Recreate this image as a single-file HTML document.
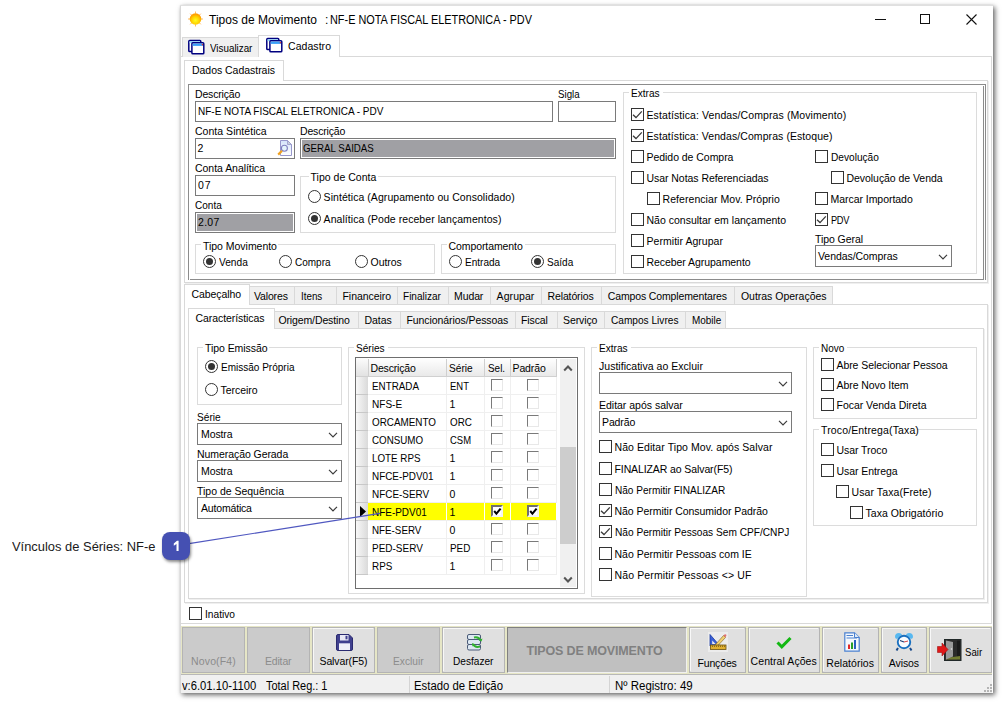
<!DOCTYPE html><html><head><meta charset="utf-8"><style>
*{margin:0;padding:0;box-sizing:content-box}
html,body{width:1002px;height:702px;overflow:hidden;background:#fff;position:relative;font-family:"Liberation Sans",sans-serif}
.t{position:absolute;white-space:nowrap;line-height:20px;font-size:11px}
.b{position:absolute}
svg.b{overflow:visible}
</style></head><body>
<div class="b" style="left:180px;top:5px;width:813px;height:688px;background:#fff;box-shadow:2px 2px 5px 0px rgba(0,0,0,0.6), 0 0 1px rgba(0,0,0,0.1)"></div>
<div class="b" style="left:180px;top:5px;width:1px;height:688px;background:#d8d8d8"></div>
<div class="b" style="left:180px;top:5px;width:813px;height:1px;background:#e0e0e0"></div>
<svg class="b" style="left:187px;top:11px" width="17" height="16" viewBox="0 0 17 16"><g stroke="#ffa020" stroke-width="1" opacity="0.7"><path d="M8.5 0.5V2.5M8.5 13.5V15.5M1 8H3M14 8H16M3.2 2.7L4.6 4.1M12.4 11.9L13.8 13.3M3.2 13.3L4.6 11.9M12.4 4.1L13.8 2.7"/></g><defs><radialGradient id="sg" cx="50%" cy="62%" r="55%"><stop offset="0" stop-color="#ffff20"/><stop offset="0.6" stop-color="#ffd000"/><stop offset="1" stop-color="#ff9a00"/></radialGradient></defs><circle cx="8.5" cy="8" r="5.8" fill="url(#sg)"/></svg>
<div class="t" style="left:209.0px;top:10px;font-size:12px;letter-spacing:0.018px;color:#000;">Tipos de Movimento</div>
<div class="t" style="left:325.0px;top:10px;font-size:12px;letter-spacing:0.000px;color:#000;">:</div>
<div class="t" style="left:330.4px;top:10px;font-size:12px;letter-spacing:0.000px;color:#000;transform:scaleX(0.9067);transform-origin:0 0;">NF-E NOTA FISCAL ELETRONICA - PDV</div>
<div class="b" style="left:875px;top:19px;width:11px;height:1px;background:#111"></div>
<div class="b" style="left:920px;top:14px;width:8px;height:8px;border:1px solid #111"></div>
<svg class="b" style="left:966px;top:14px" width="11" height="11"><path d="M0.5 0.5 L10.5 10.5 M10.5 0.5 L0.5 10.5" stroke="#111" stroke-width="1.1"/></svg>
<div class="b" style="left:180px;top:56px;width:810px;height:566px;border:1px solid #d9d9d9;background:#fff"></div>
<div class="b" style="left:182px;top:37px;width:76px;height:19px;background:#f0f0f0;border:1px solid #d9d9d9;border-bottom:none"></div>
<div class="b" style="left:258px;top:35px;width:80px;height:21px;background:#fff;border:1px solid #d9d9d9;border-bottom:none"></div>
<svg class="b" style="left:187px;top:39px" width="18" height="16" viewBox="0 0 18 16"><rect x="1.8" y="1.6" width="12" height="11" rx="0.9" fill="#fff" stroke="#000080" stroke-width="1.5"/><rect x="2.6" y="2.4" width="10.4" height="1.7" fill="#8fe0ff"/><rect x="4.9" y="3.8" width="11.9" height="11" rx="0.9" fill="#fff" stroke="#000080" stroke-width="1.5"/><rect x="5.7" y="4.6" width="10.3" height="2.3" fill="#3aa0f8"/><rect x="14.8" y="4.9" width="1.2" height="1.4" fill="#e03030"/></svg>
<div class="t" style="left:210.0px;top:38px;font-size:10.5px;letter-spacing:0.000px;color:#000;transform:scaleX(0.9348);transform-origin:0 0;">Visualizar</div>
<svg class="b" style="left:265px;top:37px" width="18" height="16" viewBox="0 0 18 16"><rect x="1.8" y="1.6" width="12" height="11" rx="0.9" fill="#fff" stroke="#000080" stroke-width="1.5"/><rect x="2.6" y="2.4" width="10.4" height="1.7" fill="#8fe0ff"/><rect x="4.9" y="3.8" width="11.9" height="11" rx="0.9" fill="#fff" stroke="#000080" stroke-width="1.5"/><rect x="5.7" y="4.6" width="10.3" height="2.3" fill="#3aa0f8"/><rect x="14.8" y="4.9" width="1.2" height="1.4" fill="#e03030"/></svg>
<div class="t" style="left:288.0px;top:36px;font-size:10.5px;letter-spacing:0.057px;color:#000;">Cadastro</div>
<div class="b" style="left:184px;top:80px;width:802px;height:201px;border:1px solid #d9d9d9;background:#fff;box-shadow:1px 1px 0 #efefef"></div>
<div class="b" style="left:184px;top:60px;width:98px;height:20px;background:#fff;border:1px solid #d9d9d9;border-bottom:none"></div>
<div class="t" style="left:192.0px;top:60px;font-size:10.5px;letter-spacing:-0.033px;color:#000;">Dados Cadastrais</div>
<div class="b" style="left:188px;top:84px;width:796px;height:195px;border-top:1px solid #8c8c8c;border-left:1px solid #8c8c8c;border-right:1px solid #8c8c8c"></div>
<div class="b" style="left:983px;top:86px;width:1px;height:193px;background:#8c8c8c"></div>
<div class="b" style="left:190px;top:279px;width:794px;height:1px;background:#8c8c8c"></div>
<div class="t" style="left:195.0px;top:84px;font-size:10.5px;letter-spacing:-0.171px;color:#000;">Descrição</div>
<div class="b" style="left:195px;top:101px;width:356px;height:19px;border:1px solid #7a7a7a;background:#fff"></div>
<div class="t" style="left:198.0px;top:101px;font-size:10.5px;letter-spacing:0.000px;color:#000;transform:scaleX(0.9515);transform-origin:0 0;">NF-E NOTA FISCAL ELETRONICA - PDV</div>
<div class="t" style="left:558.0px;top:84px;font-size:10.5px;letter-spacing:0.000px;color:#000;transform:scaleX(0.9248);transform-origin:0 0;">Sigla</div>
<div class="b" style="left:558px;top:101px;width:56px;height:19px;border:1px solid #7a7a7a;background:#fff"></div>
<div class="t" style="left:195.0px;top:121px;font-size:10.5px;letter-spacing:0.029px;color:#000;">Conta Sintética</div>
<div class="b" style="left:195px;top:138px;width:98px;height:19px;border:1px solid #7a7a7a;background:#fff"></div>
<div class="t" style="left:197.5px;top:138px;font-size:10.5px;letter-spacing:0.000px;color:#000;">2</div>
<svg class="b" style="left:275px;top:139px" width="18" height="18" viewBox="0 0 18 18"><defs><linearGradient id="pg" x1="0" y1="0" x2="0" y2="1"><stop offset="0" stop-color="#d4e4fa"/><stop offset="1" stop-color="#ffffff"/></linearGradient></defs><path d="M5.5 1.5 H12.5 L16.5 5.5 V16.5 H5.5 Z" fill="url(#pg)" stroke="#9898cc" stroke-width="1"/><path d="M12.5 1.5 V5.5 H16.5 Z" fill="#c8d0d8" stroke="#9898cc" stroke-width="0.8"/><circle cx="9.4" cy="9.3" r="3" fill="#e4f4fc" stroke="#8080c0" stroke-width="1.1"/><path d="M7 11.8 L3.2 15.6" stroke="#f0a020" stroke-width="2.2"/></svg>
<div class="t" style="left:300.0px;top:121px;font-size:10.5px;letter-spacing:-0.171px;color:#000;">Descrição</div>
<div class="b" style="left:300px;top:138px;width:314px;height:19px;border:1px solid #7a7a7a;background:#fff"></div>
<div class="b" style="left:302px;top:140px;width:312px;height:17px;background:#a0a0a4"></div>
<div class="t" style="left:303.2px;top:138px;font-size:10.5px;letter-spacing:0.000px;color:#000;transform:scaleX(0.9234);transform-origin:0 0;">GERAL SAIDAS</div>
<div class="t" style="left:195.0px;top:158px;font-size:10.5px;letter-spacing:-0.038px;color:#000;">Conta Analítica</div>
<div class="b" style="left:195px;top:175px;width:98px;height:19px;border:1px solid #7a7a7a;background:#fff"></div>
<div class="t" style="left:198.0px;top:175px;font-size:10.5px;letter-spacing:0.980px;color:#000;">07</div>
<div class="t" style="left:195.0px;top:195px;font-size:10.5px;letter-spacing:0.000px;color:#000;transform:scaleX(0.9540);transform-origin:0 0;">Conta</div>
<div class="b" style="left:195px;top:212px;width:98px;height:19px;border:1px solid #7a7a7a;background:#fff"></div>
<div class="b" style="left:197px;top:214px;width:96px;height:17px;background:#a0a0a4"></div>
<div class="t" style="left:198.0px;top:212px;font-size:10.5px;letter-spacing:0.300px;color:#000;">2.07</div>
<div class="b" style="left:300px;top:176px;width:314px;height:55px;border:1px solid #dcdcdc"></div>
<div class="b" style="left:308.5px;top:175px;width:69.8px;height:3px;background:#fff"></div>
<div class="t" style="left:310.5px;top:167px;font-size:10.5px;letter-spacing:0.016px;color:#000;">Tipo de Conta</div>
<div class="b" style="left:308px;top:190px;width:11px;height:11px;border:1px solid #333;border-radius:50%;background:#fff"></div>
<div class="t" style="left:323.6px;top:187px;font-size:10.5px;letter-spacing:0.054px;color:#000;">Sintética (Agrupamento ou Consolidado)</div>
<div class="b" style="left:308px;top:212px;width:11px;height:11px;border:1px solid #333;border-radius:50%;background:#fff"></div>
<div class="b" style="left:311px;top:215px;width:7px;height:7px;border-radius:50%;background:#333"></div>
<div class="t" style="left:323.6px;top:209px;font-size:10.5px;letter-spacing:0.061px;color:#000;">Analítica (Pode receber lançamentos)</div>
<div class="b" style="left:195px;top:244px;width:238px;height:28px;border:1px solid #dcdcdc"></div>
<div class="b" style="left:201px;top:243px;width:77.32px;height:3px;background:#fff"></div>
<div class="t" style="left:203.0px;top:236px;font-size:10.5px;letter-spacing:-0.027px;color:#000;">Tipo Movimento</div>
<div class="b" style="left:203px;top:255px;width:11px;height:11px;border:1px solid #333;border-radius:50%;background:#fff"></div>
<div class="b" style="left:206px;top:258px;width:7px;height:7px;border-radius:50%;background:#333"></div>
<div class="t" style="left:218.6px;top:252px;font-size:10.5px;letter-spacing:0.000px;color:#000;transform:scaleX(0.9679);transform-origin:0 0;">Venda</div>
<div class="b" style="left:279px;top:255px;width:11px;height:11px;border:1px solid #333;border-radius:50%;background:#fff"></div>
<div class="t" style="left:294.6px;top:252px;font-size:10.5px;letter-spacing:0.000px;color:#000;transform:scaleX(0.9512);transform-origin:0 0;">Compra</div>
<div class="b" style="left:355px;top:255px;width:11px;height:11px;border:1px solid #333;border-radius:50%;background:#fff"></div>
<div class="t" style="left:370.6px;top:252px;font-size:10.5px;letter-spacing:-0.082px;color:#000;">Outros</div>
<div class="b" style="left:441px;top:244px;width:173px;height:28px;border:1px solid #dcdcdc"></div>
<div class="b" style="left:446.5px;top:243px;width:78.25999999999999px;height:3px;background:#fff"></div>
<div class="t" style="left:448.5px;top:236px;font-size:10.5px;letter-spacing:-0.085px;color:#000;">Comportamento</div>
<div class="b" style="left:449px;top:255px;width:11px;height:11px;border:1px solid #333;border-radius:50%;background:#fff"></div>
<div class="t" style="left:464.6px;top:252px;font-size:10.5px;letter-spacing:0.000px;color:#000;transform:scaleX(0.9566);transform-origin:0 0;">Entrada</div>
<div class="b" style="left:531px;top:255px;width:11px;height:11px;border:1px solid #333;border-radius:50%;background:#fff"></div>
<div class="b" style="left:534px;top:258px;width:7px;height:7px;border-radius:50%;background:#333"></div>
<div class="t" style="left:546.6px;top:252px;font-size:10.5px;letter-spacing:0.000px;color:#000;transform:scaleX(0.9570);transform-origin:0 0;">Saída</div>
<div class="b" style="left:623px;top:92px;width:352px;height:180px;border:1px solid #dcdcdc"></div>
<div class="b" style="left:629px;top:91px;width:34.08px;height:3px;background:#fff"></div>
<div class="t" style="left:631.0px;top:83px;font-size:10.5px;letter-spacing:0.000px;color:#000;transform:scaleX(0.9615);transform-origin:0 0;">Extras</div>
<div class="b" style="left:631px;top:108px;width:11px;height:11px;border:1px solid #333;background:#fff"></div>
<svg class="b" style="left:631px;top:108px" width="13" height="13"><path d="M2 6.8 L5 9.6 L10.8 3.4" stroke="#3a3a3a" stroke-width="1.3" fill="none"/></svg>
<div class="t" style="left:646.5px;top:105px;font-size:10.5px;letter-spacing:0.095px;color:#000;">Estatística: Vendas/Compras (Movimento)</div>
<div class="b" style="left:631px;top:129px;width:11px;height:11px;border:1px solid #333;background:#fff"></div>
<svg class="b" style="left:631px;top:129px" width="13" height="13"><path d="M2 6.8 L5 9.6 L10.8 3.4" stroke="#3a3a3a" stroke-width="1.3" fill="none"/></svg>
<div class="t" style="left:646.5px;top:126px;font-size:10.5px;letter-spacing:0.077px;color:#000;">Estatística: Vendas/Compras (Estoque)</div>
<div class="b" style="left:631px;top:150px;width:11px;height:11px;border:1px solid #333;background:#fff"></div>
<div class="t" style="left:646.5px;top:147px;font-size:10.5px;letter-spacing:-0.042px;color:#000;">Pedido de Compra</div>
<div class="b" style="left:631px;top:171px;width:11px;height:11px;border:1px solid #333;background:#fff"></div>
<div class="t" style="left:646.5px;top:168px;font-size:10.5px;letter-spacing:-0.049px;color:#000;">Usar Notas Referenciadas</div>
<div class="b" style="left:647px;top:192px;width:11px;height:11px;border:1px solid #333;background:#fff"></div>
<div class="t" style="left:662.5px;top:189px;font-size:10.5px;letter-spacing:0.062px;color:#000;">Referenciar Mov. Próprio</div>
<div class="b" style="left:631px;top:213px;width:11px;height:11px;border:1px solid #333;background:#fff"></div>
<div class="t" style="left:646.5px;top:210px;font-size:10.5px;letter-spacing:0.005px;color:#000;">Não consultar em lançamento</div>
<div class="b" style="left:631px;top:234px;width:11px;height:11px;border:1px solid #333;background:#fff"></div>
<div class="t" style="left:646.5px;top:231px;font-size:10.5px;letter-spacing:0.043px;color:#000;">Permitir Agrupar</div>
<div class="b" style="left:631px;top:255px;width:11px;height:11px;border:1px solid #333;background:#fff"></div>
<div class="t" style="left:646.5px;top:252px;font-size:10.5px;letter-spacing:-0.054px;color:#000;">Receber Agrupamento</div>
<div class="b" style="left:815px;top:150px;width:11px;height:11px;border:1px solid #333;background:#fff"></div>
<div class="t" style="left:830.5px;top:147px;font-size:10.5px;letter-spacing:0.000px;color:#000;transform:scaleX(0.9647);transform-origin:0 0;">Devolução</div>
<div class="b" style="left:831px;top:171px;width:11px;height:11px;border:1px solid #333;background:#fff"></div>
<div class="t" style="left:846.5px;top:168px;font-size:10.5px;letter-spacing:-0.051px;color:#000;">Devolução de Venda</div>
<div class="b" style="left:815px;top:192px;width:11px;height:11px;border:1px solid #333;background:#fff"></div>
<div class="t" style="left:830.5px;top:189px;font-size:10.5px;letter-spacing:-0.042px;color:#000;">Marcar Importado</div>
<div class="b" style="left:815px;top:213px;width:11px;height:11px;border:1px solid #333;background:#fff"></div>
<svg class="b" style="left:815px;top:213px" width="13" height="13"><path d="M2 6.8 L5 9.6 L10.8 3.4" stroke="#3a3a3a" stroke-width="1.3" fill="none"/></svg>
<div class="t" style="left:830.5px;top:210px;font-size:10.5px;letter-spacing:-0.343px;color:#000;transform:scaleX(0.8800);transform-origin:0 0;">PDV</div>
<div class="t" style="left:815.0px;top:229px;font-size:10.5px;letter-spacing:-0.068px;color:#000;">Tipo Geral</div>
<div class="b" style="left:815px;top:245px;width:135px;height:20px;border:1px solid #7a7a7a;background:#fff"></div>
<svg class="b" style="left:938px;top:254px" width="10" height="6"><path d="M1 0.8 L5 4.8 L9 0.8" stroke="#3c3c3c" stroke-width="1.2" fill="none"/></svg>
<div class="t" style="left:818.0px;top:246px;font-size:10.5px;letter-spacing:-0.058px;color:#000;">Vendas/Compras</div>
<div class="b" style="left:184px;top:304px;width:802px;height:297px;border:1px solid #d9d9d9;background:#fff;box-shadow:1px 1px 0 #efefef"></div>
<div class="b" style="left:184px;top:284px;width:64px;height:20px;background:#fff;border:1px solid #d9d9d9;border-bottom:none"></div>
<div class="t" style="left:191.6px;top:284px;font-size:10.5px;letter-spacing:-0.100px;color:#000;">Cabeçalho</div>
<div class="b" style="left:249px;top:286px;width:44px;height:17px;background:#f0f0f0;border:1px solid #d9d9d9;border-bottom:none"></div>
<div class="t" style="left:253.9px;top:286px;font-size:10.5px;letter-spacing:-0.132px;color:#000;">Valores</div>
<div class="b" style="left:294px;top:286px;width:41px;height:17px;background:#f0f0f0;border:1px solid #d9d9d9;border-bottom:none"></div>
<div class="t" style="left:300.8px;top:286px;font-size:10.5px;letter-spacing:0.000px;color:#000;transform:scaleX(0.9346);transform-origin:0 0;">Itens</div>
<div class="b" style="left:336px;top:286px;width:60px;height:17px;background:#f0f0f0;border:1px solid #d9d9d9;border-bottom:none"></div>
<div class="t" style="left:342.5px;top:286px;font-size:10.5px;letter-spacing:-0.056px;color:#000;">Financeiro</div>
<div class="b" style="left:397px;top:286px;width:50px;height:17px;background:#f0f0f0;border:1px solid #d9d9d9;border-bottom:none"></div>
<div class="t" style="left:403.4px;top:286px;font-size:10.5px;letter-spacing:0.000px;color:#000;transform:scaleX(0.9550);transform-origin:0 0;">Finalizar</div>
<div class="b" style="left:448px;top:286px;width:41px;height:17px;background:#f0f0f0;border:1px solid #d9d9d9;border-bottom:none"></div>
<div class="t" style="left:454.0px;top:286px;font-size:10.5px;letter-spacing:-0.100px;color:#000;">Mudar</div>
<div class="b" style="left:490px;top:286px;width:50px;height:17px;background:#f0f0f0;border:1px solid #d9d9d9;border-bottom:none"></div>
<div class="t" style="left:496.6px;top:286px;font-size:10.5px;letter-spacing:0.067px;color:#000;">Agrupar</div>
<div class="b" style="left:541px;top:286px;width:59px;height:17px;background:#f0f0f0;border:1px solid #d9d9d9;border-bottom:none"></div>
<div class="t" style="left:547.5px;top:286px;font-size:10.5px;letter-spacing:-0.123px;color:#000;">Relatórios</div>
<div class="b" style="left:601px;top:286px;width:132px;height:17px;background:#f0f0f0;border:1px solid #d9d9d9;border-bottom:none"></div>
<div class="t" style="left:607.8px;top:286px;font-size:10.5px;letter-spacing:-0.140px;color:#000;">Campos Complementares</div>
<div class="b" style="left:734px;top:286px;width:97px;height:17px;background:#f0f0f0;border:1px solid #d9d9d9;border-bottom:none"></div>
<div class="t" style="left:740.9px;top:286px;font-size:10.5px;letter-spacing:-0.007px;color:#000;">Outras Operações</div>
<div class="b" style="left:188px;top:328px;width:794px;height:269px;border:1px solid #d9d9d9;background:#fff;box-shadow:1px 1px 0 #efefef"></div>
<div class="b" style="left:188px;top:308px;width:85px;height:20px;background:#fff;border:1px solid #d9d9d9;border-bottom:none"></div>
<div class="t" style="left:195.6px;top:308px;font-size:10.5px;letter-spacing:-0.084px;color:#000;">Características</div>
<div class="b" style="left:274px;top:311px;width:83px;height:16px;background:#f0f0f0;border:1px solid #d9d9d9;border-bottom:none"></div>
<div class="t" style="left:278.4px;top:310px;font-size:10.5px;letter-spacing:-0.115px;color:#000;">Origem/Destino</div>
<div class="b" style="left:358px;top:311px;width:41px;height:16px;background:#f0f0f0;border:1px solid #d9d9d9;border-bottom:none"></div>
<div class="t" style="left:364.5px;top:310px;font-size:10.5px;letter-spacing:-0.050px;color:#000;">Datas</div>
<div class="b" style="left:400px;top:311px;width:114px;height:16px;background:#f0f0f0;border:1px solid #d9d9d9;border-bottom:none"></div>
<div class="t" style="left:406.5px;top:310px;font-size:10.5px;letter-spacing:-0.079px;color:#000;">Funcionários/Pessoas</div>
<div class="b" style="left:515px;top:311px;width:41px;height:16px;background:#f0f0f0;border:1px solid #d9d9d9;border-bottom:none"></div>
<div class="t" style="left:521.0px;top:310px;font-size:10.5px;letter-spacing:-0.120px;color:#000;">Fiscal</div>
<div class="b" style="left:557px;top:311px;width:46px;height:16px;background:#f0f0f0;border:1px solid #d9d9d9;border-bottom:none"></div>
<div class="t" style="left:563.0px;top:310px;font-size:10.5px;letter-spacing:-0.094px;color:#000;">Serviço</div>
<div class="b" style="left:604px;top:311px;width:80px;height:16px;background:#f0f0f0;border:1px solid #d9d9d9;border-bottom:none"></div>
<div class="t" style="left:610.6px;top:310px;font-size:10.5px;letter-spacing:0.000px;color:#000;transform:scaleX(0.9634);transform-origin:0 0;">Campos Livres</div>
<div class="b" style="left:685px;top:311px;width:39px;height:16px;background:#f0f0f0;border:1px solid #d9d9d9;border-bottom:none"></div>
<div class="t" style="left:691.6px;top:310px;font-size:10.5px;letter-spacing:0.000px;color:#000;transform:scaleX(0.9484);transform-origin:0 0;">Mobile</div>
<div class="b" style="left:197px;top:347px;width:143px;height:56px;border:1px solid #dcdcdc"></div>
<div class="b" style="left:203px;top:346px;width:66.03999999999999px;height:3px;background:#fff"></div>
<div class="t" style="left:205.0px;top:338px;font-size:10.5px;letter-spacing:-0.059px;color:#000;">Tipo Emissão</div>
<div class="b" style="left:205px;top:360px;width:11px;height:11px;border:1px solid #333;border-radius:50%;background:#fff"></div>
<div class="b" style="left:208px;top:363px;width:7px;height:7px;border-radius:50%;background:#333"></div>
<div class="t" style="left:220.6px;top:357px;font-size:10.5px;letter-spacing:0.000px;color:#000;transform:scaleX(0.9538);transform-origin:0 0;">Emissão Própria</div>
<div class="b" style="left:205px;top:383px;width:11px;height:11px;border:1px solid #333;border-radius:50%;background:#fff"></div>
<div class="t" style="left:220.6px;top:380px;font-size:10.5px;letter-spacing:-0.045px;color:#000;">Terceiro</div>
<div class="t" style="left:196.5px;top:407px;font-size:10.5px;letter-spacing:0.000px;color:#000;transform:scaleX(0.9645);transform-origin:0 0;">Série</div>
<div class="b" style="left:197px;top:423px;width:143px;height:20px;border:1px solid #7a7a7a;background:#fff"></div>
<svg class="b" style="left:328px;top:432px" width="10" height="6"><path d="M1 0.8 L5 4.8 L9 0.8" stroke="#3c3c3c" stroke-width="1.2" fill="none"/></svg>
<div class="t" style="left:201.0px;top:424px;font-size:10.5px;letter-spacing:-0.100px;color:#000;">Mostra</div>
<div class="t" style="left:197.0px;top:444px;font-size:10.5px;letter-spacing:-0.065px;color:#000;">Numeração Gerada</div>
<div class="b" style="left:197px;top:460px;width:143px;height:20px;border:1px solid #7a7a7a;background:#fff"></div>
<svg class="b" style="left:328px;top:469px" width="10" height="6"><path d="M1 0.8 L5 4.8 L9 0.8" stroke="#3c3c3c" stroke-width="1.2" fill="none"/></svg>
<div class="t" style="left:201.0px;top:461px;font-size:10.5px;letter-spacing:-0.100px;color:#000;">Mostra</div>
<div class="t" style="left:197.0px;top:481px;font-size:10.5px;letter-spacing:-0.012px;color:#000;">Tipo de Sequência</div>
<div class="b" style="left:197px;top:497px;width:143px;height:20px;border:1px solid #7a7a7a;background:#fff"></div>
<svg class="b" style="left:328px;top:506px" width="10" height="6"><path d="M1 0.8 L5 4.8 L9 0.8" stroke="#3c3c3c" stroke-width="1.2" fill="none"/></svg>
<div class="t" style="left:201.0px;top:498px;font-size:10.5px;letter-spacing:-0.174px;color:#000;">Automática</div>
<div class="b" style="left:348px;top:347px;width:235px;height:245px;border:1px solid #dcdcdc"></div>
<div class="b" style="left:354px;top:346px;width:34.08px;height:3px;background:#fff"></div>
<div class="t" style="left:356.0px;top:338px;font-size:10.5px;letter-spacing:0.000px;color:#000;transform:scaleX(0.9604);transform-origin:0 0;">Séries</div>
<div class="b" style="left:355px;top:357px;width:221px;height:230px;border:1px solid #6e6e6e;background:#fff"></div>
<div class="b" style="left:356px;top:358px;width:201px;height:18px;background:linear-gradient(#ffffff,#e9e9e9)"></div>
<div class="b" style="left:356px;top:376px;width:201px;height:1px;background:#d0d0d0"></div>
<div class="b" style="left:356px;top:358px;width:12px;height:18px;background:linear-gradient(#fcfcfc,#e2e2e2)"></div>
<div class="b" style="left:368px;top:359px;width:1px;height:17px;background:#cfcfcf"></div>
<div class="b" style="left:446px;top:359px;width:1px;height:17px;background:#cfcfcf"></div>
<div class="b" style="left:484px;top:359px;width:1px;height:17px;background:#cfcfcf"></div>
<div class="b" style="left:510px;top:359px;width:1px;height:17px;background:#cfcfcf"></div>
<div class="b" style="left:556px;top:359px;width:1px;height:17px;background:#cfcfcf"></div>
<div class="t" style="left:370.5px;top:358px;font-size:10.5px;letter-spacing:-0.171px;color:#000;">Descrição</div>
<div class="t" style="left:449.0px;top:358px;font-size:10.5px;letter-spacing:0.000px;color:#000;transform:scaleX(0.9645);transform-origin:0 0;">Série</div>
<div class="t" style="left:487.5px;top:358px;font-size:10.5px;letter-spacing:0.000px;color:#000;transform:scaleX(0.9444);transform-origin:0 0;">Sel.</div>
<div class="t" style="left:512.5px;top:358px;font-size:10.5px;letter-spacing:-0.125px;color:#000;">Padrão</div>
<div class="b" style="left:356px;top:377px;width:12px;height:17px;background:linear-gradient(90deg,#f8f8f8,#dadada)"></div>
<div class="b" style="left:356px;top:394px;width:12px;height:1px;background:#c8c8c8"></div>
<div class="b" style="left:368px;top:394px;width:189px;height:1px;background:#efefef"></div>
<div class="b" style="left:446px;top:377px;width:1px;height:17px;background:#efefef"></div>
<div class="b" style="left:484px;top:377px;width:1px;height:17px;background:#efefef"></div>
<div class="b" style="left:510px;top:377px;width:1px;height:17px;background:#efefef"></div>
<div class="b" style="left:556px;top:377px;width:1px;height:17px;background:#efefef"></div>
<div class="t" style="left:371.5px;top:376px;font-size:10.5px;letter-spacing:0.000px;color:#000;transform:scaleX(0.9353);transform-origin:0 0;">ENTRADA</div>
<div class="t" style="left:449.6px;top:376px;font-size:10.5px;letter-spacing:0.000px;color:#000;transform:scaleX(0.9000);transform-origin:0 0;">ENT</div>
<div class="b" style="left:491px;top:379px;width:10px;height:10px;border-top:1px solid #7a7a7a;border-left:1px solid #7a7a7a;border-right:1px solid #e8e8e8;border-bottom:1px solid #e8e8e8"></div>
<div class="b" style="left:527px;top:379px;width:10px;height:10px;border-top:1px solid #7a7a7a;border-left:1px solid #7a7a7a;border-right:1px solid #e8e8e8;border-bottom:1px solid #e8e8e8"></div>
<div class="b" style="left:356px;top:395px;width:12px;height:17px;background:linear-gradient(90deg,#f8f8f8,#dadada)"></div>
<div class="b" style="left:356px;top:412px;width:12px;height:1px;background:#c8c8c8"></div>
<div class="b" style="left:368px;top:412px;width:189px;height:1px;background:#efefef"></div>
<div class="b" style="left:446px;top:395px;width:1px;height:17px;background:#efefef"></div>
<div class="b" style="left:484px;top:395px;width:1px;height:17px;background:#efefef"></div>
<div class="b" style="left:510px;top:395px;width:1px;height:17px;background:#efefef"></div>
<div class="b" style="left:556px;top:395px;width:1px;height:17px;background:#efefef"></div>
<div class="t" style="left:371.5px;top:394px;font-size:10.5px;letter-spacing:0.000px;color:#000;transform:scaleX(0.9581);transform-origin:0 0;">NFS-E</div>
<div class="t" style="left:449.6px;top:394px;font-size:10.5px;letter-spacing:0.000px;color:#000;">1</div>
<div class="b" style="left:491px;top:397px;width:10px;height:10px;border-top:1px solid #7a7a7a;border-left:1px solid #7a7a7a;border-right:1px solid #e8e8e8;border-bottom:1px solid #e8e8e8"></div>
<div class="b" style="left:527px;top:397px;width:10px;height:10px;border-top:1px solid #7a7a7a;border-left:1px solid #7a7a7a;border-right:1px solid #e8e8e8;border-bottom:1px solid #e8e8e8"></div>
<div class="b" style="left:356px;top:413px;width:12px;height:17px;background:linear-gradient(90deg,#f8f8f8,#dadada)"></div>
<div class="b" style="left:356px;top:430px;width:12px;height:1px;background:#c8c8c8"></div>
<div class="b" style="left:368px;top:430px;width:189px;height:1px;background:#efefef"></div>
<div class="b" style="left:446px;top:413px;width:1px;height:17px;background:#efefef"></div>
<div class="b" style="left:484px;top:413px;width:1px;height:17px;background:#efefef"></div>
<div class="b" style="left:510px;top:413px;width:1px;height:17px;background:#efefef"></div>
<div class="b" style="left:556px;top:413px;width:1px;height:17px;background:#efefef"></div>
<div class="t" style="left:371.5px;top:412px;font-size:10.5px;letter-spacing:0.000px;color:#000;transform:scaleX(0.9391);transform-origin:0 0;">ORCAMENTO</div>
<div class="t" style="left:449.6px;top:412px;font-size:10.5px;letter-spacing:0.000px;color:#000;transform:scaleX(0.9375);transform-origin:0 0;">ORC</div>
<div class="b" style="left:491px;top:415px;width:10px;height:10px;border-top:1px solid #7a7a7a;border-left:1px solid #7a7a7a;border-right:1px solid #e8e8e8;border-bottom:1px solid #e8e8e8"></div>
<div class="b" style="left:527px;top:415px;width:10px;height:10px;border-top:1px solid #7a7a7a;border-left:1px solid #7a7a7a;border-right:1px solid #e8e8e8;border-bottom:1px solid #e8e8e8"></div>
<div class="b" style="left:356px;top:431px;width:12px;height:17px;background:linear-gradient(90deg,#f8f8f8,#dadada)"></div>
<div class="b" style="left:356px;top:448px;width:12px;height:1px;background:#c8c8c8"></div>
<div class="b" style="left:368px;top:448px;width:189px;height:1px;background:#efefef"></div>
<div class="b" style="left:446px;top:431px;width:1px;height:17px;background:#efefef"></div>
<div class="b" style="left:484px;top:431px;width:1px;height:17px;background:#efefef"></div>
<div class="b" style="left:510px;top:431px;width:1px;height:17px;background:#efefef"></div>
<div class="b" style="left:556px;top:431px;width:1px;height:17px;background:#efefef"></div>
<div class="t" style="left:371.5px;top:430px;font-size:10.5px;letter-spacing:0.000px;color:#000;transform:scaleX(0.9321);transform-origin:0 0;">CONSUMO</div>
<div class="t" style="left:449.6px;top:430px;font-size:10.5px;letter-spacing:0.000px;color:#000;transform:scaleX(0.9000);transform-origin:0 0;">CSM</div>
<div class="b" style="left:491px;top:433px;width:10px;height:10px;border-top:1px solid #7a7a7a;border-left:1px solid #7a7a7a;border-right:1px solid #e8e8e8;border-bottom:1px solid #e8e8e8"></div>
<div class="b" style="left:527px;top:433px;width:10px;height:10px;border-top:1px solid #7a7a7a;border-left:1px solid #7a7a7a;border-right:1px solid #e8e8e8;border-bottom:1px solid #e8e8e8"></div>
<div class="b" style="left:356px;top:449px;width:12px;height:17px;background:linear-gradient(90deg,#f8f8f8,#dadada)"></div>
<div class="b" style="left:356px;top:466px;width:12px;height:1px;background:#c8c8c8"></div>
<div class="b" style="left:368px;top:466px;width:189px;height:1px;background:#efefef"></div>
<div class="b" style="left:446px;top:449px;width:1px;height:17px;background:#efefef"></div>
<div class="b" style="left:484px;top:449px;width:1px;height:17px;background:#efefef"></div>
<div class="b" style="left:510px;top:449px;width:1px;height:17px;background:#efefef"></div>
<div class="b" style="left:556px;top:449px;width:1px;height:17px;background:#efefef"></div>
<div class="t" style="left:371.5px;top:448px;font-size:10.5px;letter-spacing:0.000px;color:#000;transform:scaleX(0.9346);transform-origin:0 0;">LOTE RPS</div>
<div class="t" style="left:449.6px;top:448px;font-size:10.5px;letter-spacing:0.000px;color:#000;">1</div>
<div class="b" style="left:491px;top:451px;width:10px;height:10px;border-top:1px solid #7a7a7a;border-left:1px solid #7a7a7a;border-right:1px solid #e8e8e8;border-bottom:1px solid #e8e8e8"></div>
<div class="b" style="left:527px;top:451px;width:10px;height:10px;border-top:1px solid #7a7a7a;border-left:1px solid #7a7a7a;border-right:1px solid #e8e8e8;border-bottom:1px solid #e8e8e8"></div>
<div class="b" style="left:356px;top:467px;width:12px;height:17px;background:linear-gradient(90deg,#f8f8f8,#dadada)"></div>
<div class="b" style="left:356px;top:484px;width:12px;height:1px;background:#c8c8c8"></div>
<div class="b" style="left:368px;top:484px;width:189px;height:1px;background:#efefef"></div>
<div class="b" style="left:446px;top:467px;width:1px;height:17px;background:#efefef"></div>
<div class="b" style="left:484px;top:467px;width:1px;height:17px;background:#efefef"></div>
<div class="b" style="left:510px;top:467px;width:1px;height:17px;background:#efefef"></div>
<div class="b" style="left:556px;top:467px;width:1px;height:17px;background:#efefef"></div>
<div class="t" style="left:371.5px;top:466px;font-size:10.5px;letter-spacing:0.000px;color:#000;transform:scaleX(0.9415);transform-origin:0 0;">NFCE-PDV01</div>
<div class="t" style="left:449.6px;top:466px;font-size:10.5px;letter-spacing:0.000px;color:#000;">1</div>
<div class="b" style="left:491px;top:469px;width:10px;height:10px;border-top:1px solid #7a7a7a;border-left:1px solid #7a7a7a;border-right:1px solid #e8e8e8;border-bottom:1px solid #e8e8e8"></div>
<div class="b" style="left:527px;top:469px;width:10px;height:10px;border-top:1px solid #7a7a7a;border-left:1px solid #7a7a7a;border-right:1px solid #e8e8e8;border-bottom:1px solid #e8e8e8"></div>
<div class="b" style="left:356px;top:485px;width:12px;height:17px;background:linear-gradient(90deg,#f8f8f8,#dadada)"></div>
<div class="b" style="left:356px;top:502px;width:12px;height:1px;background:#c8c8c8"></div>
<div class="b" style="left:368px;top:502px;width:189px;height:1px;background:#efefef"></div>
<div class="b" style="left:446px;top:485px;width:1px;height:17px;background:#efefef"></div>
<div class="b" style="left:484px;top:485px;width:1px;height:17px;background:#efefef"></div>
<div class="b" style="left:510px;top:485px;width:1px;height:17px;background:#efefef"></div>
<div class="b" style="left:556px;top:485px;width:1px;height:17px;background:#efefef"></div>
<div class="t" style="left:371.5px;top:484px;font-size:10.5px;letter-spacing:0.000px;color:#000;transform:scaleX(0.9443);transform-origin:0 0;">NFCE-SERV</div>
<div class="t" style="left:449.6px;top:484px;font-size:10.5px;letter-spacing:0.000px;color:#000;">0</div>
<div class="b" style="left:491px;top:487px;width:10px;height:10px;border-top:1px solid #7a7a7a;border-left:1px solid #7a7a7a;border-right:1px solid #e8e8e8;border-bottom:1px solid #e8e8e8"></div>
<div class="b" style="left:527px;top:487px;width:10px;height:10px;border-top:1px solid #7a7a7a;border-left:1px solid #7a7a7a;border-right:1px solid #e8e8e8;border-bottom:1px solid #e8e8e8"></div>
<div class="b" style="left:356px;top:503px;width:12px;height:17px;background:linear-gradient(90deg,#f8f8f8,#dadada)"></div>
<div class="b" style="left:356px;top:520px;width:12px;height:1px;background:#c8c8c8"></div>
<div class="b" style="left:368px;top:503px;width:188px;height:17px;background:#ffff00"></div>
<svg class="b" style="left:360px;top:506px" width="7" height="11"><path d="M0 0 L6 5.5 L0 11 Z" fill="#000"/></svg>
<div class="b" style="left:446px;top:503px;width:1px;height:17px;background:#fff"></div>
<div class="b" style="left:484px;top:503px;width:1px;height:17px;background:#fff"></div>
<div class="b" style="left:510px;top:503px;width:1px;height:17px;background:#fff"></div>
<div class="b" style="left:368px;top:520px;width:189px;height:1px;background:#efefef"></div>
<div class="t" style="left:371.5px;top:502px;font-size:10.5px;letter-spacing:0.000px;color:#000;transform:scaleX(0.9466);transform-origin:0 0;">NFE-PDV01</div>
<div class="t" style="left:449.6px;top:502px;font-size:10.5px;letter-spacing:0.000px;color:#000;">1</div>
<div class="b" style="left:491px;top:505px;width:8px;height:8px;border-top:2px solid #707070;border-left:2px solid #707070;border-right:2px solid #f4f4f4;border-bottom:2px solid #f4f4f4;background:#fff"></div>
<svg class="b" style="left:491px;top:505px" width="13" height="13"><path d="M3.2 6 L5.4 8.6 L9.6 3.6" stroke="#000" stroke-width="2" fill="none"/></svg>
<div class="b" style="left:527px;top:505px;width:8px;height:8px;border-top:2px solid #707070;border-left:2px solid #707070;border-right:2px solid #f4f4f4;border-bottom:2px solid #f4f4f4;background:#fff"></div>
<svg class="b" style="left:527px;top:505px" width="13" height="13"><path d="M3.2 6 L5.4 8.6 L9.6 3.6" stroke="#000" stroke-width="2" fill="none"/></svg>
<div class="b" style="left:356px;top:521px;width:12px;height:17px;background:linear-gradient(90deg,#f8f8f8,#dadada)"></div>
<div class="b" style="left:356px;top:538px;width:12px;height:1px;background:#c8c8c8"></div>
<div class="b" style="left:368px;top:538px;width:189px;height:1px;background:#efefef"></div>
<div class="b" style="left:446px;top:521px;width:1px;height:17px;background:#efefef"></div>
<div class="b" style="left:484px;top:521px;width:1px;height:17px;background:#efefef"></div>
<div class="b" style="left:510px;top:521px;width:1px;height:17px;background:#efefef"></div>
<div class="b" style="left:556px;top:521px;width:1px;height:17px;background:#efefef"></div>
<div class="t" style="left:371.5px;top:520px;font-size:10.5px;letter-spacing:0.000px;color:#000;transform:scaleX(0.9333);transform-origin:0 0;">NFE-SERV</div>
<div class="t" style="left:449.6px;top:520px;font-size:10.5px;letter-spacing:0.000px;color:#000;">0</div>
<div class="b" style="left:491px;top:523px;width:10px;height:10px;border-top:1px solid #7a7a7a;border-left:1px solid #7a7a7a;border-right:1px solid #e8e8e8;border-bottom:1px solid #e8e8e8"></div>
<div class="b" style="left:527px;top:523px;width:10px;height:10px;border-top:1px solid #7a7a7a;border-left:1px solid #7a7a7a;border-right:1px solid #e8e8e8;border-bottom:1px solid #e8e8e8"></div>
<div class="b" style="left:356px;top:539px;width:12px;height:17px;background:linear-gradient(90deg,#f8f8f8,#dadada)"></div>
<div class="b" style="left:356px;top:556px;width:12px;height:1px;background:#c8c8c8"></div>
<div class="b" style="left:368px;top:556px;width:189px;height:1px;background:#efefef"></div>
<div class="b" style="left:446px;top:539px;width:1px;height:17px;background:#efefef"></div>
<div class="b" style="left:484px;top:539px;width:1px;height:17px;background:#efefef"></div>
<div class="b" style="left:510px;top:539px;width:1px;height:17px;background:#efefef"></div>
<div class="b" style="left:556px;top:539px;width:1px;height:17px;background:#efefef"></div>
<div class="t" style="left:371.5px;top:538px;font-size:10.5px;letter-spacing:0.000px;color:#000;transform:scaleX(0.9500);transform-origin:0 0;">PED-SERV</div>
<div class="t" style="left:449.6px;top:538px;font-size:10.5px;letter-spacing:0.000px;color:#000;transform:scaleX(0.9409);transform-origin:0 0;">PED</div>
<div class="b" style="left:491px;top:541px;width:10px;height:10px;border-top:1px solid #7a7a7a;border-left:1px solid #7a7a7a;border-right:1px solid #e8e8e8;border-bottom:1px solid #e8e8e8"></div>
<div class="b" style="left:527px;top:541px;width:10px;height:10px;border-top:1px solid #7a7a7a;border-left:1px solid #7a7a7a;border-right:1px solid #e8e8e8;border-bottom:1px solid #e8e8e8"></div>
<div class="b" style="left:356px;top:557px;width:12px;height:17px;background:linear-gradient(90deg,#f8f8f8,#dadada)"></div>
<div class="b" style="left:356px;top:574px;width:12px;height:1px;background:#c8c8c8"></div>
<div class="b" style="left:368px;top:574px;width:189px;height:1px;background:#efefef"></div>
<div class="b" style="left:446px;top:557px;width:1px;height:17px;background:#efefef"></div>
<div class="b" style="left:484px;top:557px;width:1px;height:17px;background:#efefef"></div>
<div class="b" style="left:510px;top:557px;width:1px;height:17px;background:#efefef"></div>
<div class="b" style="left:556px;top:557px;width:1px;height:17px;background:#efefef"></div>
<div class="t" style="left:371.5px;top:556px;font-size:10.5px;letter-spacing:0.000px;color:#000;transform:scaleX(0.9409);transform-origin:0 0;">RPS</div>
<div class="t" style="left:449.6px;top:556px;font-size:10.5px;letter-spacing:0.000px;color:#000;">1</div>
<div class="b" style="left:491px;top:559px;width:10px;height:10px;border-top:1px solid #7a7a7a;border-left:1px solid #7a7a7a;border-right:1px solid #e8e8e8;border-bottom:1px solid #e8e8e8"></div>
<div class="b" style="left:527px;top:559px;width:10px;height:10px;border-top:1px solid #7a7a7a;border-left:1px solid #7a7a7a;border-right:1px solid #e8e8e8;border-bottom:1px solid #e8e8e8"></div>
<div class="b" style="left:560px;top:359px;width:16px;height:228px;background:#f0f0f0"></div>
<div class="b" style="left:560px;top:447px;width:16px;height:97px;background:#cdcdcd"></div>
<svg class="b" style="left:563px;top:364px" width="10" height="8"><path d="M1.2 6.5 L5 2.5 L8.8 6.5" stroke="#555" stroke-width="2" fill="none"/></svg>
<svg class="b" style="left:563px;top:576px" width="10" height="8"><path d="M1.2 1.5 L5 5.5 L8.8 1.5" stroke="#555" stroke-width="2" fill="none"/></svg>
<div class="b" style="left:591px;top:347px;width:214px;height:248px;border:1px solid #dcdcdc"></div>
<div class="b" style="left:597px;top:346px;width:34.08px;height:3px;background:#fff"></div>
<div class="t" style="left:599.0px;top:338px;font-size:10.5px;letter-spacing:0.000px;color:#000;transform:scaleX(0.9615);transform-origin:0 0;">Extras</div>
<div class="t" style="left:599.0px;top:356px;font-size:10.5px;letter-spacing:0.027px;color:#000;">Justificativa ao Excluir</div>
<div class="b" style="left:599px;top:372px;width:191px;height:20px;border:1px solid #7a7a7a;background:#fff"></div>
<svg class="b" style="left:778px;top:381px" width="10" height="6"><path d="M1 0.8 L5 4.8 L9 0.8" stroke="#3c3c3c" stroke-width="1.2" fill="none"/></svg>
<div class="t" style="left:599.0px;top:395px;font-size:10.5px;letter-spacing:-0.012px;color:#000;">Editar após salvar</div>
<div class="b" style="left:599px;top:411px;width:191px;height:20px;border:1px solid #7a7a7a;background:#fff"></div>
<svg class="b" style="left:778px;top:420px" width="10" height="6"><path d="M1 0.8 L5 4.8 L9 0.8" stroke="#3c3c3c" stroke-width="1.2" fill="none"/></svg>
<div class="t" style="left:602.0px;top:412px;font-size:10.5px;letter-spacing:-0.125px;color:#000;">Padrão</div>
<div class="b" style="left:599px;top:440px;width:11px;height:11px;border:1px solid #333;background:#fff"></div>
<div class="t" style="left:614.5px;top:437px;font-size:10.5px;letter-spacing:0.074px;color:#000;">Não Editar Tipo Mov. após Salvar</div>
<div class="b" style="left:599px;top:462px;width:11px;height:11px;border:1px solid #333;background:#fff"></div>
<div class="t" style="left:614.5px;top:459px;font-size:10.5px;letter-spacing:-0.102px;color:#000;">FINALIZAR ao Salvar(F5)</div>
<div class="b" style="left:599px;top:483px;width:11px;height:11px;border:1px solid #333;background:#fff"></div>
<div class="t" style="left:614.5px;top:480px;font-size:10.5px;letter-spacing:0.000px;color:#000;transform:scaleX(0.9584);transform-origin:0 0;">Não Permitir FINALIZAR</div>
<div class="b" style="left:599px;top:504px;width:11px;height:11px;border:1px solid #333;background:#fff"></div>
<svg class="b" style="left:599px;top:504px" width="13" height="13"><path d="M2 6.8 L5 9.6 L10.8 3.4" stroke="#3a3a3a" stroke-width="1.3" fill="none"/></svg>
<div class="t" style="left:614.5px;top:501px;font-size:10.5px;letter-spacing:-0.043px;color:#000;">Não Permitir Consumidor Padrão</div>
<div class="b" style="left:599px;top:525px;width:11px;height:11px;border:1px solid #333;background:#fff"></div>
<svg class="b" style="left:599px;top:525px" width="13" height="13"><path d="M2 6.8 L5 9.6 L10.8 3.4" stroke="#3a3a3a" stroke-width="1.3" fill="none"/></svg>
<div class="t" style="left:614.5px;top:522px;font-size:10.5px;letter-spacing:0.000px;color:#000;transform:scaleX(0.9667);transform-origin:0 0;">Não Permitir Pessoas Sem CPF/CNPJ</div>
<div class="b" style="left:599px;top:547px;width:11px;height:11px;border:1px solid #333;background:#fff"></div>
<div class="t" style="left:614.5px;top:544px;font-size:10.5px;letter-spacing:0.006px;color:#000;">Não Permitir Pessoas com IE</div>
<div class="b" style="left:599px;top:568px;width:11px;height:11px;border:1px solid #333;background:#fff"></div>
<div class="t" style="left:614.5px;top:565px;font-size:10.5px;letter-spacing:0.131px;color:#000;">Não Permitir Pessoas &lt;&gt; UF</div>
<div class="b" style="left:813px;top:347px;width:162px;height:70px;border:1px solid #dcdcdc"></div>
<div class="b" style="left:819px;top:346px;width:28.439999999999998px;height:3px;background:#fff"></div>
<div class="t" style="left:821.0px;top:338px;font-size:10.5px;letter-spacing:0.000px;color:#000;transform:scaleX(0.9490);transform-origin:0 0;">Novo</div>
<div class="b" style="left:821px;top:358px;width:11px;height:11px;border:1px solid #333;background:#fff"></div>
<div class="t" style="left:836.5px;top:355px;font-size:10.5px;letter-spacing:-0.072px;color:#000;">Abre Selecionar Pessoa</div>
<div class="b" style="left:821px;top:378px;width:11px;height:11px;border:1px solid #333;background:#fff"></div>
<div class="t" style="left:836.5px;top:375px;font-size:10.5px;letter-spacing:-0.070px;color:#000;">Abre Novo Item</div>
<div class="b" style="left:821px;top:398px;width:11px;height:11px;border:1px solid #333;background:#fff"></div>
<div class="t" style="left:836.5px;top:395px;font-size:10.5px;letter-spacing:-0.027px;color:#000;">Focar Venda Direta</div>
<div class="b" style="left:813px;top:429px;width:162px;height:95px;border:1px solid #dcdcdc"></div>
<div class="b" style="left:819px;top:428px;width:98.0px;height:3px;background:#fff"></div>
<div class="t" style="left:821.0px;top:420px;font-size:10.5px;letter-spacing:0.142px;color:#000;">Troco/Entrega(Taxa)</div>
<div class="b" style="left:821px;top:443px;width:11px;height:11px;border:1px solid #333;background:#fff"></div>
<div class="t" style="left:836.5px;top:440px;font-size:10.5px;letter-spacing:-0.067px;color:#000;">Usar Troco</div>
<div class="b" style="left:821px;top:464px;width:11px;height:11px;border:1px solid #333;background:#fff"></div>
<div class="t" style="left:836.5px;top:461px;font-size:10.5px;letter-spacing:-0.068px;color:#000;">Usar Entrega</div>
<div class="b" style="left:836px;top:485px;width:11px;height:11px;border:1px solid #333;background:#fff"></div>
<div class="t" style="left:851.5px;top:482px;font-size:10.5px;letter-spacing:0.094px;color:#000;">Usar Taxa(Frete)</div>
<div class="b" style="left:850px;top:506px;width:11px;height:11px;border:1px solid #333;background:#fff"></div>
<div class="t" style="left:865.5px;top:503px;font-size:10.5px;letter-spacing:0.046px;color:#000;">Taxa Obrigatório</div>
<div class="b" style="left:189px;top:607px;width:11px;height:11px;border:1px solid #333;background:#fff"></div>
<div class="t" style="left:205.0px;top:604px;font-size:10.5px;letter-spacing:0.000px;color:#000;transform:scaleX(0.9689);transform-origin:0 0;">Inativo</div>
<div class="b" style="left:181px;top:624px;width:811px;height:2px;background:#fff"></div>
<div class="b" style="left:181px;top:626px;width:811px;height:49px;background:#e6e6c6"></div>
<div class="b" style="left:182px;top:627px;width:61px;height:44px;border:1px solid #b4b4b4;background:#cbcbcb"></div>
<div class="t" style="left:191.1px;top:651px;font-size:10.5px;letter-spacing:0.129px;color:#8c8c8c;">Novo(F4)</div>
<div class="b" style="left:247px;top:627px;width:61px;height:44px;border:1px solid #b4b4b4;background:#cbcbcb"></div>
<div class="t" style="left:264.9px;top:651px;font-size:10.5px;letter-spacing:-0.148px;color:#8c8c8c;">Editar</div>
<div class="b" style="left:312px;top:627px;width:61px;height:44px;border:1px solid #b4b4b4;background:#e0e0e0"></div>
<div class="b" style="left:313px;top:628px;width:59px;height:42px;border-top:1px solid #f8f8f8;border-left:1px solid #f8f8f8"></div>
<div class="t" style="left:319.5px;top:651px;font-size:10.5px;letter-spacing:-0.118px;color:#000;">Salvar(F5)</div>
<div class="b" style="left:377px;top:627px;width:61px;height:44px;border:1px solid #b4b4b4;background:#cbcbcb"></div>
<div class="t" style="left:393.0px;top:651px;font-size:10.5px;letter-spacing:0.000px;color:#8c8c8c;transform:scaleX(0.9694);transform-origin:0 0;">Excluir</div>
<div class="b" style="left:442px;top:627px;width:61px;height:44px;border:1px solid #b4b4b4;background:#e0e0e0"></div>
<div class="b" style="left:443px;top:628px;width:59px;height:42px;border-top:1px solid #f8f8f8;border-left:1px solid #f8f8f8"></div>
<div class="t" style="left:452.8px;top:651px;font-size:10.5px;letter-spacing:0.000px;color:#000;transform:scaleX(0.9619);transform-origin:0 0;">Desfazer</div>
<div class="b" style="left:507px;top:627px;width:178px;height:44px;border:1px solid #808080;border-right-color:#f0f0f0;border-bottom-color:#f0f0f0;background:#c0c0c0"></div>
<div class="t" style="left:526.5px;top:641px;font-size:12.5px;letter-spacing:-0.147px;color:#808080;font-weight:bold;">TIPOS DE MOVIMENTO</div>
<div class="b" style="left:689px;top:627px;width:55px;height:44px;border:1px solid #b4b4b4;background:#e0e0e0"></div>
<div class="b" style="left:690px;top:628px;width:53px;height:42px;border-top:1px solid #f8f8f8;border-left:1px solid #f8f8f8"></div>
<div class="t" style="left:697.4px;top:653px;font-size:10.5px;letter-spacing:-0.133px;color:#000;">Funções</div>
<div class="b" style="left:748px;top:627px;width:70px;height:44px;border:1px solid #b4b4b4;background:#e0e0e0"></div>
<div class="b" style="left:749px;top:628px;width:68px;height:42px;border-top:1px solid #f8f8f8;border-left:1px solid #f8f8f8"></div>
<div class="t" style="left:750.6px;top:651px;font-size:10.5px;letter-spacing:0.067px;color:#000;">Central Ações</div>
<div class="b" style="left:822px;top:627px;width:55px;height:44px;border:1px solid #b4b4b4;background:#e0e0e0"></div>
<div class="b" style="left:823px;top:628px;width:53px;height:42px;border-top:1px solid #f8f8f8;border-left:1px solid #f8f8f8"></div>
<div class="t" style="left:826.3px;top:653px;font-size:10.5px;letter-spacing:0.044px;color:#000;">Relatórios</div>
<div class="b" style="left:881px;top:627px;width:44px;height:44px;border:1px solid #b4b4b4;background:#e0e0e0"></div>
<div class="b" style="left:882px;top:628px;width:42px;height:42px;border-top:1px solid #f8f8f8;border-left:1px solid #f8f8f8"></div>
<div class="t" style="left:888.8px;top:653px;font-size:10.5px;letter-spacing:-0.100px;color:#000;">Avisos</div>
<div class="b" style="left:929px;top:627px;width:61px;height:44px;border:1px solid #b4b4b4;background:#e0e0e0"></div>
<div class="b" style="left:930px;top:628px;width:59px;height:42px;border-top:1px solid #f8f8f8;border-left:1px solid #f8f8f8"></div>
<div class="t" style="left:960.5px;top:651px;font-size:10.5px;letter-spacing:0.000px;color:#000;"></div>
<div class="t" style="left:965.3px;top:642px;font-size:10.5px;letter-spacing:0.000px;color:#000;transform:scaleX(0.9158);transform-origin:0 0;">Sair</div>
<svg class="b" style="left:336px;top:634px" width="17" height="17" viewBox="0 0 17 17"><path d="M2 0.5 H13 L16.5 4 V15 Q16.5 16.5 15 16.5 H2 Q0.5 16.5 0.5 15 V2 Q0.5 0.5 2 0.5 Z" fill="#40408e" stroke="#2a2a70" stroke-width="1"/><rect x="4" y="1" width="8.5" height="5.5" fill="#e8e8f4"/><rect x="9.5" y="1.8" width="2" height="3.5" fill="#40408e"/><rect x="3" y="9" width="11" height="7" fill="#f0f0f8"/><rect x="3" y="9" width="11" height="1" fill="#b8b8d8"/></svg>
<svg class="b" style="left:467px;top:634px" width="16" height="17" viewBox="0 0 16 17"><g fill="#dde8f2" stroke="#4a5a78" stroke-width="1"><rect x="0.5" y="0.5" width="13" height="5" rx="1.5"/><rect x="0.5" y="5.5" width="13" height="5" rx="1.5"/><rect x="0.5" y="10.5" width="13" height="5.5" rx="1.5"/></g><path d="M7 3.5 Q12 2.5 13.5 6.5" stroke="#30b030" stroke-width="2" fill="none"/><path d="M11.5 6 L14.5 7.5 L15.5 4.5 Z" fill="#30b030"/><path d="M13 12.5 Q8 14 6 10" stroke="#30b030" stroke-width="2" fill="none"/><path d="M8 10.5 L5 9 L5.5 12.5 Z" fill="#30b030"/></svg>
<svg class="b" style="left:708px;top:632px" width="20" height="20" viewBox="0 0 20 20"><rect x="0" y="0" width="20" height="20" fill="#ececec"/><path d="M2 2.5 L2 14 L12 14 Z" fill="#3a60d8" stroke="#1e3ca0" stroke-width="0.8"/><path d="M4.2 8.5 L4.2 12 L7.6 12 Z" fill="#ececec"/><path d="M7.5 12.5 L15.5 3.5 L17.5 5.5 L9.5 14 L7 14.5 Z" fill="#f0d070" stroke="#806020" stroke-width="0.6"/><path d="M15.5 3.5 L16.5 2.5 Q17.5 2 18.5 3 L17.5 5.5 Z" fill="#e07070"/><rect x="2.5" y="13" width="15.5" height="4.5" fill="#e0b030" stroke="#6a5010" stroke-width="0.8"/><path d="M4.5 13.5 V15 M6.5 13.5 V15 M8.5 13.5 V15 M10.5 13.5 V15 M12.5 13.5 V15 M14.5 13.5 V15 M16.5 13.5 V15" stroke="#6a5010" stroke-width="0.7"/></svg>
<svg class="b" style="left:776px;top:636px" width="16" height="13" viewBox="0 0 16 13"><path d="M1.5 6.5 L5.8 10.8 L14.5 2" stroke="#12b812" stroke-width="3" fill="none"/></svg>
<svg class="b" style="left:844px;top:632px" width="16" height="20" viewBox="0 0 16 20"><path d="M0.8 0.8 H10.5 L15.2 5.5 V19.2 H0.8 Z" fill="#f4f8fc" stroke="#4a80d0" stroke-width="1.2"/><path d="M10.5 0.8 V5.5 H15.2" fill="#dce8f6" stroke="#4a80d0" stroke-width="1"/><path d="M2.5 3.5 H9 M2.5 6 H13" stroke="#4a80d0" stroke-width="1"/><rect x="4" y="12.5" width="2" height="4.5" fill="#e02828"/><rect x="7" y="10.5" width="2" height="6.5" fill="#28a028"/><rect x="10" y="8" width="2" height="9" fill="#2860c0"/></svg>
<svg class="b" style="left:894px;top:632px" width="20" height="19" viewBox="0 0 20 19"><path d="M1 5 Q1 1 5 1 Q7 1 8 2.5 L3 7 Q1 6.5 1 5 Z" fill="#58b8f0"/><path d="M19 5 Q19 1 15 1 Q13 1 12 2.5 L17 7 Q19 6.5 19 5 Z" fill="#58b8f0"/><path d="M4 16 L2.5 18.5 M16 16 L17.5 18.5" stroke="#1a4a8a" stroke-width="2"/><circle cx="10" cy="10" r="7.2" fill="#1a70c0"/><circle cx="10" cy="10" r="5.3" fill="#f8fbff"/><path d="M10 10 L6 8.5" stroke="#1a3a70" stroke-width="1.2"/><path d="M10 10 L14 9" stroke="#d03030" stroke-width="0.9"/></svg>
<svg class="b" style="left:937px;top:639px" width="25" height="22" viewBox="0 0 25 22"><rect x="7.5" y="0.5" width="16.5" height="21" fill="#303030" stroke="#202828" stroke-width="1"/><path d="M20 1.5 H23 V20.5 H20 Z" fill="#1a1a1a"/><path d="M9 1.5 L20 1.5 L20 20.5 L9 20.5 Z" fill="#2a2a2a"/><path d="M9 20.5 H23 V17 L9 19 Z" fill="#707a30"/><path d="M9 1.5 L16 3 L16 17.5 L9 20.5 Z" fill="#9a9a9a"/><circle cx="14.5" cy="10" r="0.8" fill="#e8e8e8"/><path d="M0.5 7.5 H5 V4 L11 10.5 L5 17 V13.5 H0.5 Z" fill="#e01818" stroke="#a01010" stroke-width="0.6"/></svg>
<div class="b" style="left:181px;top:674px;width:811px;height:1px;background:#b8b8b8"></div>
<div class="b" style="left:181px;top:675px;width:811px;height:18px;background:#f0f0f0"></div>
<div class="b" style="left:409px;top:676px;width:1px;height:17px;background:#d4d4d4"></div>
<div class="b" style="left:609px;top:676px;width:1px;height:17px;background:#d4d4d4"></div>
<div class="t" style="left:182.0px;top:676px;font-size:12px;letter-spacing:0.000px;color:#000;transform:scaleX(0.9367);transform-origin:0 0;">v:6.01.10-1100</div>
<div class="t" style="left:266.0px;top:676px;font-size:12px;letter-spacing:0.000px;color:#000;transform:scaleX(0.9118);transform-origin:0 0;">Total Reg.: 1</div>
<div class="t" style="left:414.0px;top:676px;font-size:12px;letter-spacing:0.000px;color:#000;transform:scaleX(0.9457);transform-origin:0 0;">Estado de Edição</div>
<div class="t" style="left:614.5px;top:676px;font-size:12px;letter-spacing:0.000px;color:#000;transform:scaleX(0.9580);transform-origin:0 0;">Nº Registro: 49</div>
<div class="b" style="left:990px;top:684px;width:2px;height:2px;background:#b4b4b4"></div>
<div class="b" style="left:987px;top:687px;width:2px;height:2px;background:#b4b4b4"></div>
<div class="b" style="left:990px;top:687px;width:2px;height:2px;background:#b4b4b4"></div>
<div class="b" style="left:984px;top:690px;width:2px;height:2px;background:#b4b4b4"></div>
<div class="b" style="left:987px;top:690px;width:2px;height:2px;background:#b4b4b4"></div>
<div class="b" style="left:990px;top:690px;width:2px;height:2px;background:#b4b4b4"></div>
<div class="t" style="left:12.4px;top:537px;font-size:13.6px;letter-spacing:0.000px;color:#1a1a1a;transform:scaleX(0.9493);transform-origin:0 0;">Vínculos de Séries: NF-e</div>
<svg class="b" style="left:0;top:0" width="1002" height="702"><line x1="189" y1="543.6" x2="380" y2="513.4" stroke="#5058c0" stroke-width="1.1"/></svg>
<div class="b" style="left:162px;top:532px;width:28px;height:28px;border-radius:8px;background:#4550b2;box-shadow:1px 2px 3px rgba(0,0,0,0.45)"></div>
<svg class="b" style="left:0;top:0" width="1002" height="702"><path d="M173.8 543.6 L177 540.8 H178.6 V551 H176.5 V543.9 L173.8 545.7 Z" fill="#fff"/></svg>
</body></html>
